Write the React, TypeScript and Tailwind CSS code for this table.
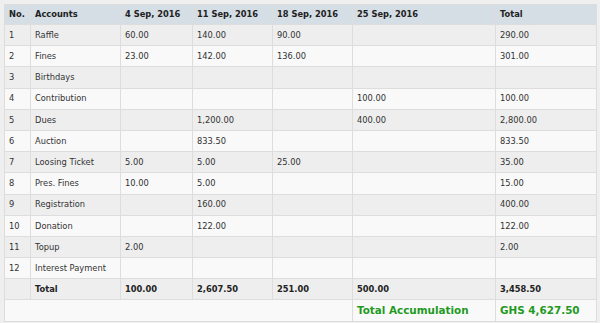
import React from "react";

const rows: [string, string, string, string, string, string, string][] = [
  ["1", "Raffle", "60.00", "140.00", "90.00", "", "290.00"],
  ["2", "Fines", "23.00", "142.00", "136.00", "", "301.00"],
  ["3", "Birthdays", "", "", "", "", ""],
  ["4", "Contribution", "", "", "", "100.00", "100.00"],
  ["5", "Dues", "", "1,200.00", "", "400.00", "2,800.00"],
  ["6", "Auction", "", "833.50", "", "", "833.50"],
  ["7", "Loosing Ticket", "5.00", "5.00", "25.00", "", "35.00"],
  ["8", "Pres. Fines", "10.00", "5.00", "", "", "15.00"],
  ["9", "Registration", "", "160.00", "", "", "400.00"],
  ["10", "Donation", "", "122.00", "", "", "122.00"],
  ["11", "Topup", "2.00", "", "", "", "2.00"],
  ["12", "Interest Payment", "", "", "", "", ""],
];

const cell = "border border-[#dddddd] px-[4px] py-0 text-left align-middle whitespace-nowrap";

export default function App() {
  return (
    <div
      className="w-[600px] h-[323px] bg-[#efefef] pt-[4px] pl-[4px] overflow-hidden"
      style={{ fontFamily: '"DejaVu Sans", Verdana, sans-serif' }}
    >
      <table className="table-fixed border-collapse w-[592px] text-[8.3px] text-[#333333]">
        <colgroup>
          <col className="w-[26px]" />
          <col className="w-[90px]" />
          <col className="w-[72px]" />
          <col className="w-[80px]" />
          <col className="w-[80px]" />
          <col className="w-[143px]" />
          <col className="w-[101px]" />
        </colgroup>
        <thead>
          <tr className="h-[20px] bg-[#d5dde5] font-bold text-[#222222]">
            <th className={cell + " font-bold"}>No.</th>
            <th className={cell + " font-bold"}>Accounts</th>
            <th className={cell + " font-bold"}>4 Sep, 2016</th>
            <th className={cell + " font-bold"}>11 Sep, 2016</th>
            <th className={cell + " font-bold"}>18 Sep, 2016</th>
            <th className={cell + " font-bold"}>25 Sep, 2016</th>
            <th className={cell + " font-bold"}>Total</th>
          </tr>
        </thead>
        <tbody>
          {rows.map((r, i) => (
            <tr key={i} className={"h-[21.2px] " + (i % 2 === 0 ? "bg-[#eeeeee]" : "bg-[#f9f9f9]")}>
              {r.map((c, j) => (
                <td key={j} className={cell}>
                  {c}
                </td>
              ))}
            </tr>
          ))}
          <tr className="h-[21px] bg-[#eeeeee] font-bold text-[#222222]">
            <td className={cell}></td>
            <td className={cell}>Total</td>
            <td className={cell}>100.00</td>
            <td className={cell}>2,607.50</td>
            <td className={cell}>251.00</td>
            <td className={cell}>500.00</td>
            <td className={cell}>3,458.50</td>
          </tr>
          <tr className="h-[22px] bg-[#f9f9f9]">
            <td className={cell} colSpan={5}></td>
            <td className={cell + " font-bold text-[10.4px] text-[#1f9a1f]"}>Total Accumulation</td>
            <td className={cell + " font-bold text-[10.4px] text-[#1f9a1f]"}>GHS 4,627.50</td>
          </tr>
        </tbody>
      </table>
    </div>
  );
}
